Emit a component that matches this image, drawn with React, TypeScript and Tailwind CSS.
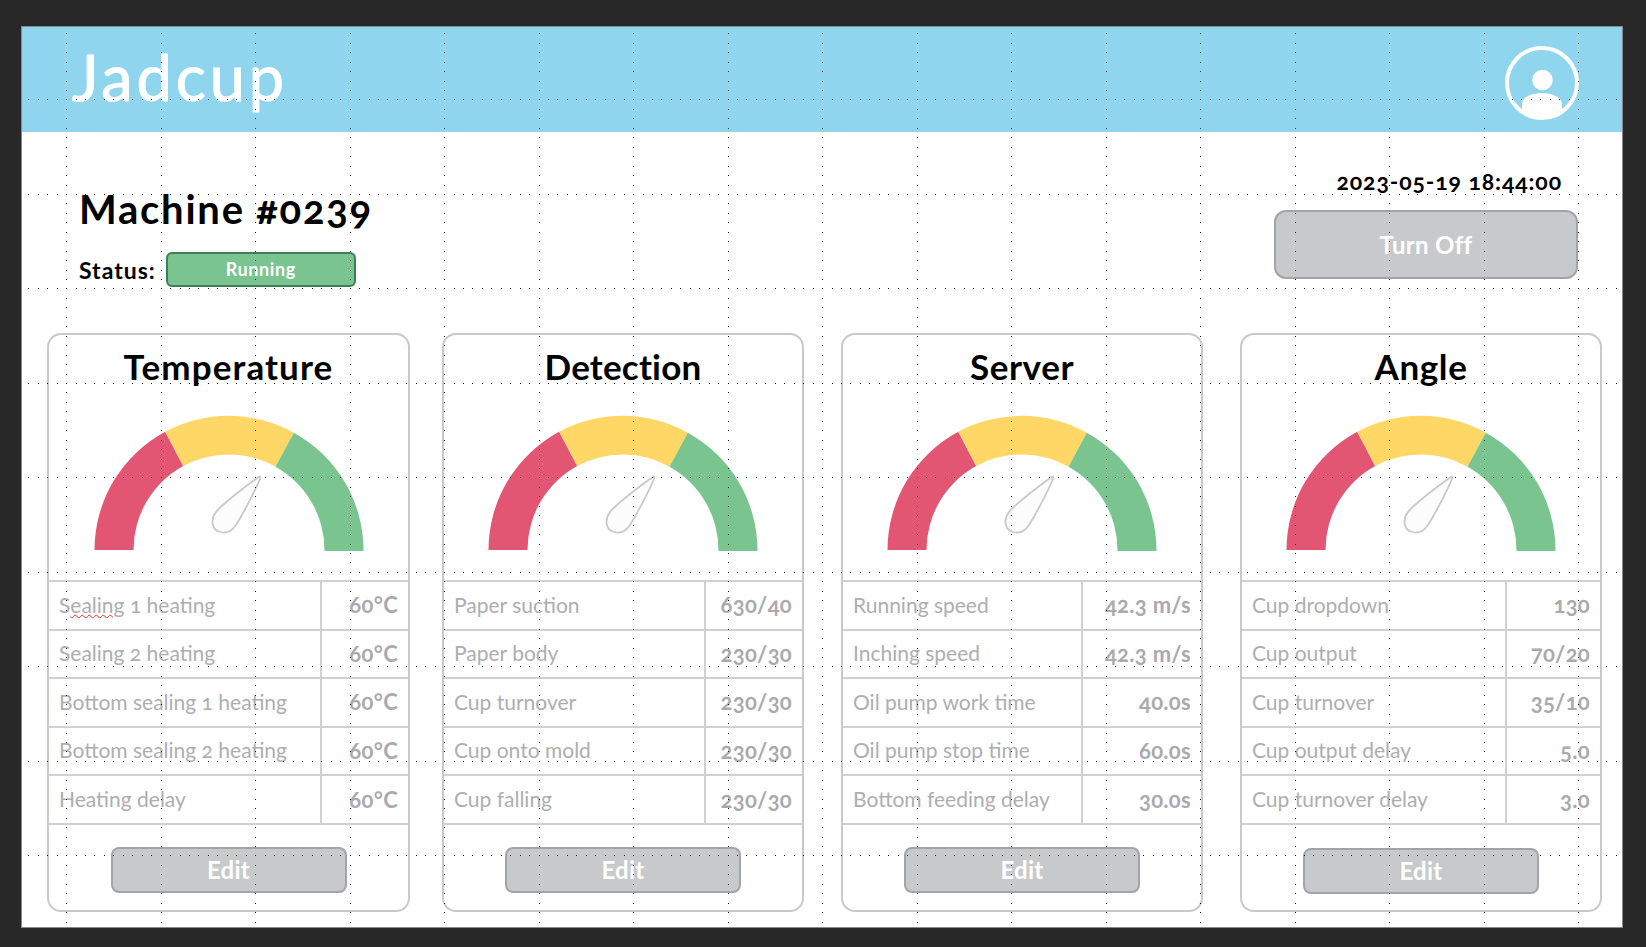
import React from "react";

const gridDots = (() => {
  let d = "";
  let red = "";
  const dot = (x: number, y: number) => `M${Math.round(x)} ${Math.round(y)}h1v1h-1z`;
  for (let k = 0; k <= 16; k++) {
    const x = 66 + 94.5 * k;
    for (let i = 0; i < 95; i++) {
      const y = 33.3 + 9.45 * i;
      if (y < 130) red += dot(x, y);
      else d += dot(x, y);
    }
  }
  for (let k = 0; k <= 8; k++) {
    const y = 99 + 94.5 * k;
    for (let i = 0; i < 169; i++) d += dot(28.3 + 9.45 * i, y);
  }
  return { d, red };
})();

function Gauge() {
  return (
    <svg viewBox="0 0 358 187" className="block w-[358px] h-[187px] ml-auto">
      <path d="M44.5 157 A134.5 134.5 0 0 1 115.2 38.7 L133.2 73 A95.5 95.5 0 0 0 83.5 157 Z" fill="#e25674" />
      <path d="M115.2 38.7 A134.5 134.5 0 0 1 243.8 39.7 L225.5 73.7 A95.5 95.5 0 0 0 133.2 73 Z" fill="#ffd766" />
      <path d="M243.8 39.7 A134.5 134.5 0 0 1 313.5 158 L274.5 158 A95.5 95.5 0 0 0 225.5 73.7 Z" fill="#7ac490" />
      <path
        d="M209.2 83.7 C200 90 172 111 166 119 C160 127 162 137 170 139 C177 141 182 138 186 132 C193 121 205 98 210 86 C210.5 84 210.5 83 209.2 83.7 Z"
        fill="#fcfcfc"
        stroke="#c9c9c9"
        strokeWidth="1.8"
      />
    </svg>
  );
}

type Row = { label: React.ReactNode; value: string };

function Card({
  title,
  rows,
  cardClass,
  titleClass,
  valueClass,
  buttonClass,
}: {
  title: string;
  rows: Row[];
  cardClass: string;
  titleClass: string;
  valueClass: string;
  buttonClass: string;
}) {
  return (
    <section className={`h-[579px] shrink-0 border-2 border-[#c9c9c9] rounded-[14px] flex flex-col ${cardClass}`}>
      <h2 className={`h-[58px] flex items-end justify-center pb-[7px] text-[35px] leading-[40px] font-bold text-black ${titleClass}`}>
        {title}
      </h2>
      <Gauge />
      <div className="border-t-2 border-[#d0d0d0]">
        {rows.map((r, i) => (
          <div key={i} className="h-[48.6px] flex border-b-2 border-[#d0d0d0]">
            <div className="flex-1 border-r-2 border-[#d0d0d0] pl-[10px] pb-[2px] flex items-center text-[21px] font-normal text-[#adaeb1] whitespace-nowrap">
              {r.label}
            </div>
            <div className={`flex items-center justify-end pr-[10px] pb-[1px] text-[22px] font-bold text-[#a9aaad] tracking-[0.3px] whitespace-nowrap ${valueClass}`}>
              {r.value}
            </div>
          </div>
        ))}
      </div>
      <button className={`self-center w-[236px] h-[46px] rounded-lg border-2 border-[#a3a4a7] bg-[#c8c9cb] text-white text-[24px] font-bold tracking-[0.3px] ${buttonClass}`}>
        Edit
      </button>
    </section>
  );
}

const temp: Row[] = [
  {
    label: (
      <span>
        S<span className="underline decoration-wavy decoration-[#e03030] decoration-1">ealing</span> 1 heating
      </span>
    ),
    value: "60°C",
  },
  { label: "Sealing 2 heating", value: "60°C" },
  { label: "Bottom sealing 1 heating", value: "60°C" },
  { label: "Bottom sealing 2 heating", value: "60°C" },
  { label: "Heating delay", value: "60°C" },
];
const detection: Row[] = [
  { label: "Paper suction", value: "630/40" },
  { label: "Paper body", value: "230/30" },
  { label: "Cup turnover", value: "230/30" },
  { label: "Cup onto mold", value: "230/30" },
  { label: "Cup falling", value: "230/30" },
];
const server: Row[] = [
  { label: "Running speed", value: "42.3 m/s" },
  { label: "Inching speed", value: "42.3 m/s" },
  { label: "Oil pump work time", value: "40.0s" },
  { label: "Oil pump stop time", value: "60.0s" },
  { label: "Bottom feeding delay", value: "30.0s" },
];
const angle: Row[] = [
  { label: "Cup dropdown", value: "130" },
  { label: "Cup output", value: "70/20" },
  { label: "Cup turnover", value: "35/10" },
  { label: "Cup output delay", value: "5.0" },
  { label: "Cup turnover delay", value: "3.0" },
];

export default function App() {
  return (
    <div className="relative w-[1646px] h-[947px] bg-[#282828] pt-[26px] pl-[21px] overflow-hidden font-['Lato','Noto_Sans',sans-serif] [font-variant-numeric:oldstyle-nums] [font-feature-settings:'onum']">
      <main className="w-[1602px] h-[902px] bg-white border border-[#8a8a8a] flex flex-col">
        <header className="h-[105px] shrink-0 bg-[#90d5ee] flex items-center justify-between pl-[50px] pr-[43px]">
          <div className="text-[63px] leading-none text-white tracking-[3.9px] -mt-[6px] [-webkit-text-stroke:1px_white]">Jadcup</div>
          <svg viewBox="0 0 74 74" className="w-[74px] h-[74px] mt-[7px]">
            <defs>
              <clipPath id="avatar-clip">
                <circle cx="37" cy="37" r="35" />
              </clipPath>
            </defs>
            <circle cx="37" cy="37" r="35" fill="none" stroke="white" strokeWidth="4" />
            <circle cx="37.5" cy="34" r="10.3" fill="white" />
            <path d="M17 74 V58 C17 51 27 47 37 47 C47 47 57 51 57 58 V74 Z" fill="white" clipPath="url(#avatar-clip)" />
          </svg>
        </header>

        <div className="h-[201px] shrink-0 flex justify-between pl-[57px] pr-[44px]">
          <div>
            <h1 className="mt-[52px] text-[40px] leading-[50px] font-bold text-black tracking-[1.75px]">Machine #0239</h1>
            <div className="mt-[17px] flex items-center gap-[10px]">
              <span className="text-[23px] leading-[35px] pt-[2px] font-bold text-black tracking-[1px]">Status:</span>
              <span className="w-[190px] h-[35px] rounded-md border-2 border-[#3f7f58] bg-[#7ac490] text-white text-[18px] font-bold tracking-[0.6px] flex items-center justify-center">
                Running
              </span>
            </div>
          </div>
          <div className="flex flex-col items-end">
            <div className="mt-[34px] mr-[16px] text-[23px] leading-[30px] font-bold text-black tracking-[0.9px]">2023-05-19 18:44:00</div>
            <button className="mt-[14px] w-[304px] h-[69px] rounded-xl border-2 border-[#a3a4a7] bg-[#c8c9cb] text-white text-[24px] font-bold tracking-[0.3px]">
              Turn Off
            </button>
          </div>
        </div>

        <div className="flex pl-[25px]">
          <Card title="Temperature" rows={temp} cardClass="w-[363px]" titleClass="tracking-[1.1px]" valueClass="w-[86px]" buttonClass="mt-[22px]" />
          <Card title="Detection" rows={detection} cardClass="w-[362px] ml-[32px]" titleClass="tracking-[0.2px]" valueClass="w-[96px]" buttonClass="mt-[22px]" />
          <Card title="Server" rows={server} cardClass="w-[362px] ml-[37px]" titleClass="tracking-[0.6px]" valueClass="w-[118px]" buttonClass="mt-[22px]" />
          <Card title="Angle" rows={angle} cardClass="w-[362px] ml-[37px]" titleClass="tracking-[0.6px]" valueClass="w-[93px]" buttonClass="mt-[23px]" />
        </div>
      </main>

      <svg className="absolute inset-0 w-[1646px] h-[947px] pointer-events-none" viewBox="0 0 1646 947" shapeRendering="crispEdges" aria-hidden="true">
        <path d={gridDots.red} fill="#7a2a10" />
        <path d={gridDots.d} fill="#111111" />
      </svg>
    </div>
  );
}
